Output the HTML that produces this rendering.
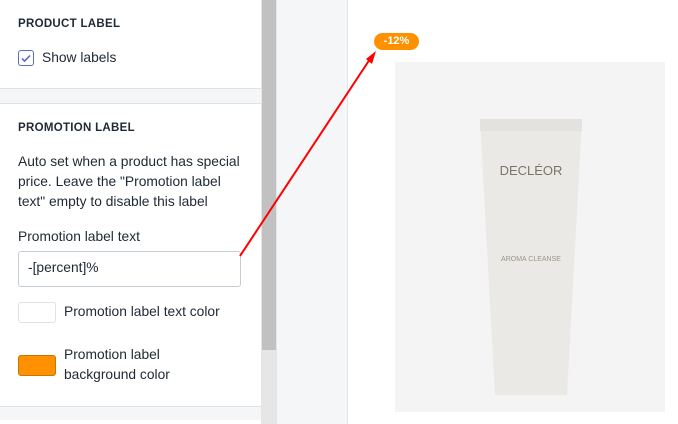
<html><head><style>
html,body{margin:0;width:678px;height:424px;overflow:hidden}
body{position:relative;background:#f4f6f8;font-family:"Liberation Sans",sans-serif;color:#212b36}
.p{position:absolute;left:0;width:261px;background:#fff}
.h{position:absolute;left:18px;font-size:11.5px;font-weight:bold;color:#212b36;letter-spacing:0.3px}
.t{position:absolute;left:18px;font-size:13.8px;line-height:20px;color:#212b36}
</style></head><body>
<div class="p" style="top:0;height:88px;border-bottom:1px solid #dfe3e8"></div>
<div class="p" style="top:103px;height:302px;border-top:1px solid #dfe3e8;border-bottom:1px solid #dfe3e8"></div>
<div class="p" style="top:420px;height:4px"></div>
<div class="h" style="top:18px">PRODUCT LABEL</div>
<div style="position:absolute;left:18px;top:50px;width:14px;height:14px;border:1px solid #5c6ac4;border-radius:3px;background:#fff"><svg width="14" height="14"><path d="M3 7.5l2.6 2.6L11 4.5" fill="none" stroke="#5c6ac4" stroke-width="1.6"/></svg></div>
<div class="t" style="left:42px;top:48px">Show labels</div>
<div class="h" style="top:122px">PROMOTION LABEL</div>
<div class="t" style="top:152px">Auto set when a product has special<br>price. Leave the "Promotion label<br>text" empty to disable this label</div>
<div class="t" style="top:227px">Promotion label text</div>
<div style="position:absolute;left:18px;top:251px;width:221px;height:34px;border:1px solid #c4cdd5;border-radius:3px;background:#fff"></div>
<div class="t" style="left:28px;top:258px">-[percent]%</div>
<div style="position:absolute;left:18px;top:302px;width:36px;height:19px;border:1px solid #dfe3e8;border-radius:3px;background:#fff"></div>
<div class="t" style="left:64px;top:302px">Promotion label text color</div>
<div style="position:absolute;left:18px;top:355px;width:36px;height:19px;border:1px solid #c87600;border-radius:3px;background:#ff9100"></div>
<div class="t" style="left:64px;top:345px">Promotion label<br>background color</div>
<div style="position:absolute;left:261px;top:0;width:16px;height:424px;background:#e6e6e6"></div>
<div style="position:absolute;left:262px;top:0;width:14px;height:350px;background:#c1c1c1"></div>
<div style="position:absolute;left:347px;top:0;width:331px;height:424px;background:#fff;border-left:1px solid #e3e5e8"></div>
<div style="position:absolute;left:395px;top:62px;width:270px;height:350px;background:#f4f4f4"></div>
<svg style="position:absolute;left:0;top:0" width="678" height="424">
<path d="M480 119 L582 119 L567 395 L495 395 Z" fill="#ebe9e6"/>
<rect x="480" y="119" width="102" height="12" fill="#e4e2de"/>
<text x="531" y="175" font-size="13" fill="#7a7466" text-anchor="middle" font-family="Liberation Sans">DECLÉOR</text>
<text x="531" y="261" font-size="7" fill="#9a9488" text-anchor="middle" font-family="Liberation Sans">AROMA CLEANSE</text>
<line x1="240" y1="256" x2="372" y2="56" stroke="#f00" stroke-width="2"/>
<path d="M376 51 L372 64 L366 59 Z" fill="#f00"/>
</svg>
<div style="position:absolute;left:374px;top:33px;width:45px;height:17px;border-radius:9px;background:#ff9100;color:#fff;font-size:11px;font-weight:bold;text-align:center;line-height:17px">-12%</div>
</body></html>
